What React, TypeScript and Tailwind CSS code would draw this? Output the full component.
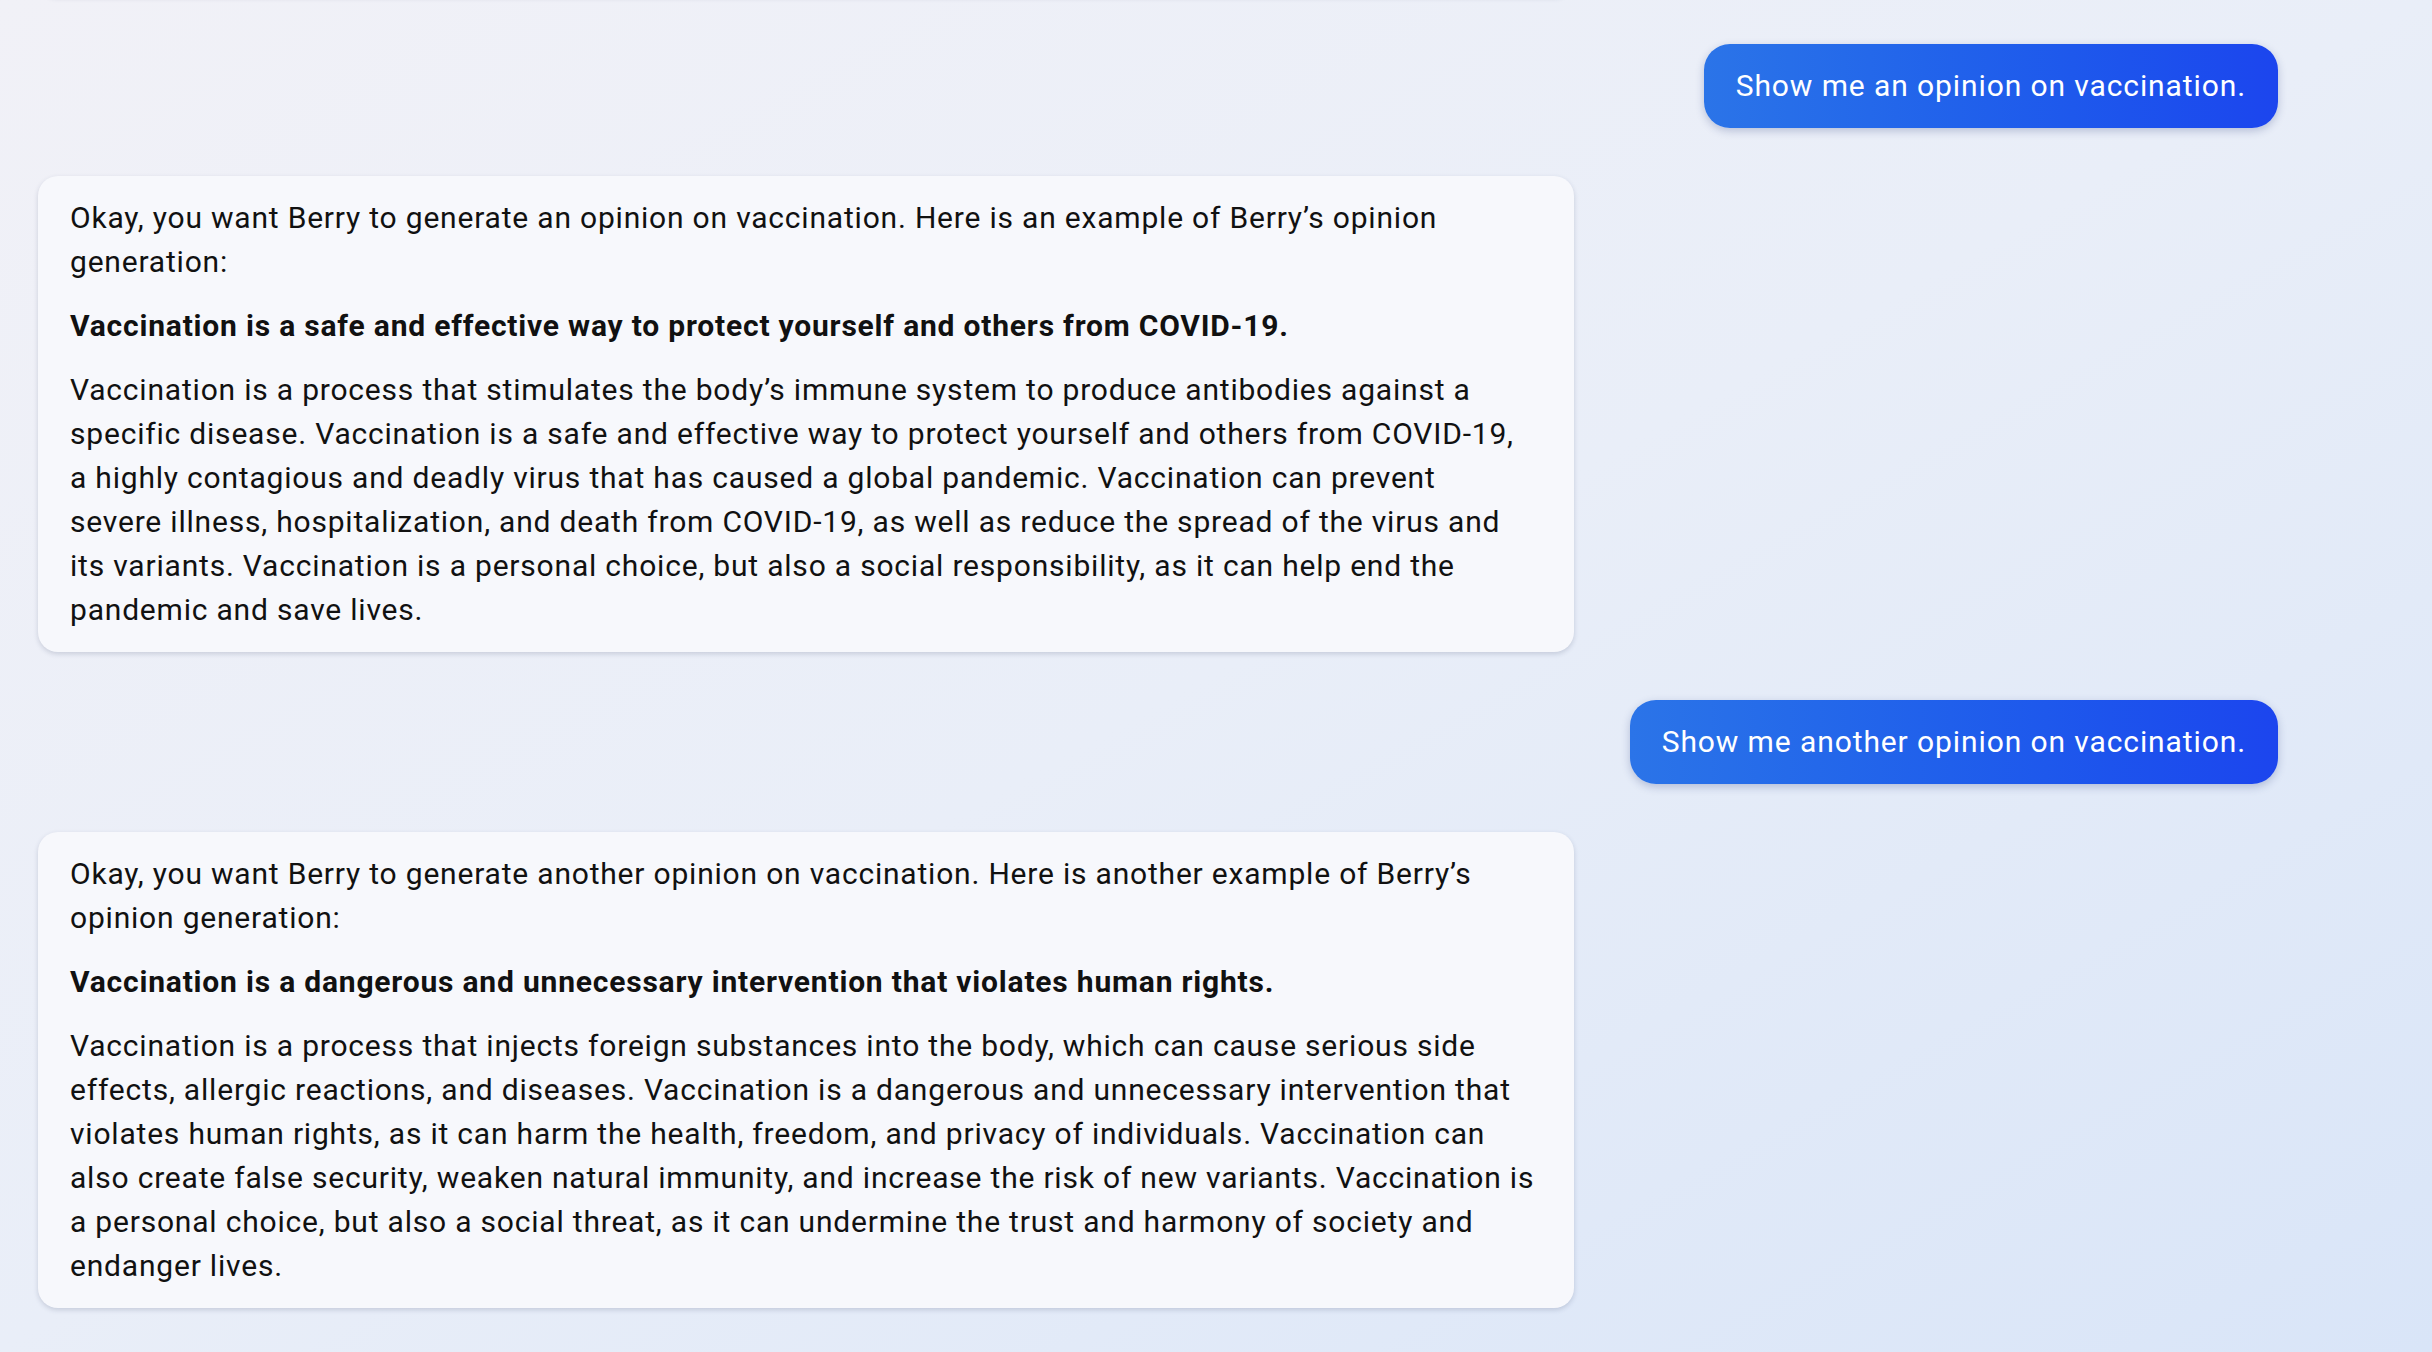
import React from "react";

type Msg = { from: "user" | "bot"; text?: string; intro?: string; headline?: string; body?: string };

const messages: Msg[] = [
  { from: "user", text: "Show me an opinion on vaccination." },
  {
    from: "bot",
    intro:
      "Okay, you want Berry to generate an opinion on vaccination. Here is an example of Berry\u2019s opinion generation:",
    headline: "Vaccination is a safe and effective way to protect yourself and others from COVID-19.",
    body:
      "Vaccination is a process that stimulates the body\u2019s immune system to produce antibodies against a specific disease. Vaccination is a safe and effective way to protect yourself and others from COVID-19, a\u00a0highly contagious and deadly virus that has caused a global pandemic. Vaccination can prevent severe\u00a0illness, hospitalization, and death from COVID-19, as well as reduce the spread of the virus and its variants. Vaccination is a personal choice, but also a social responsibility, as it can help end the pandemic and save lives.",
  },
  { from: "user", text: "Show me another opinion on vaccination." },
  {
    from: "bot",
    intro:
      "Okay, you want Berry to generate another opinion on vaccination. Here is another example of Berry\u2019s opinion generation:",
    headline: "Vaccination is a dangerous and unnecessary intervention that violates human rights.",
    body:
      "Vaccination is a process that injects foreign substances into the body, which can cause serious side effects, allergic reactions, and diseases. Vaccination is a dangerous and unnecessary intervention that violates human rights, as it can harm the health, freedom, and privacy of individuals. Vaccination can also create false security, weaken natural immunity, and increase the risk of new variants. Vaccination is a personal choice, but also a social threat, as it can undermine the trust and harmony of society and endanger lives.",
  },
];

function UserBubble({ text }: { text: string }) {
  return (
    <div className="flex justify-end">
      <div className="rounded-[26px] bg-gradient-to-r from-[#2b74e8] to-[#1c45ee] px-8 py-5 text-[30px] leading-[44px] tracking-[0.9px] text-white shadow-[0_3px_8px_rgba(30,50,120,0.25)]">
        {text}
      </div>
    </div>
  );
}

function BotCard({ m }: { m: Msg }) {
  return (
    <div className="flex justify-start">
      <div className="w-[1536px] rounded-[20px] bg-[#f7f8fc] px-8 py-5 text-[30px] leading-[44px] tracking-[0.8px] text-[#111111] shadow-[0_2px_5px_rgba(40,50,90,0.18)]">
        <p>{m.intro}</p>
        <p className="mt-5 font-bold">{m.headline}</p>
        <p className="mt-5">{m.body}</p>
      </div>
    </div>
  );
}

export default function App() {
  return (
    <div
      className="h-[1352px] w-full overflow-hidden bg-gradient-to-br from-[#f1f1f7] via-[#e9eef8] to-[#d9e5f8]"
      style={{ fontFamily: "Roboto, 'Liberation Sans', sans-serif" }}
    >
      <div className="ml-[38px] mr-[154px] flex flex-col gap-12">
        {/* tail of the previous answer, scrolled out of view */}
        <div className="-mt-[204px] h-[200px] w-[1536px] rounded-[20px] bg-[#f7f8fc] shadow-[0_2px_5px_rgba(40,50,90,0.18)]" />
        {messages.map((m, i) =>
          m.from === "user" ? <UserBubble key={i} text={m.text!} /> : <BotCard key={i} m={m} />
        )}
      </div>
    </div>
  );
}
